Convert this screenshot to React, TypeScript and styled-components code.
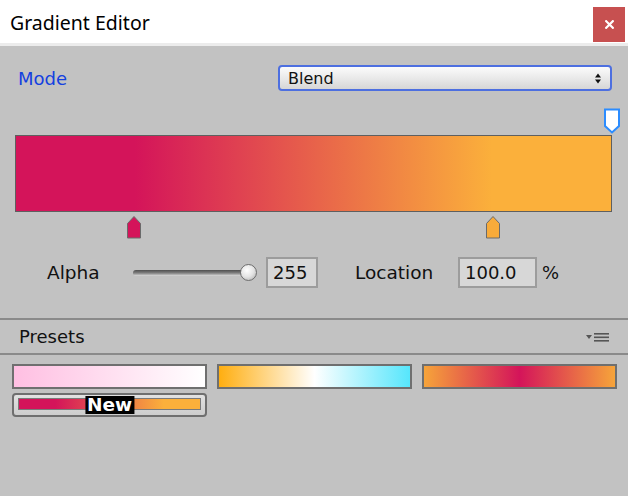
import React from 'react';
import styled, { createGlobalStyle } from 'styled-components';

const GlobalStyle = createGlobalStyle`
  html, body {
    margin: 0;
    padding: 0;
    background: #c2c2c2;
  }
  * {
    box-sizing: border-box;
  }
`;

const CRIMSON = '#d4145a';
const ORANGE = '#fbb03b';

const Window = styled.div`
  width: 628px;
  height: 496px;
  background: #c2c2c2;
  display: flex;
  flex-direction: column;
  font-family: 'DejaVu Sans', Verdana, sans-serif;
  color: #111;
  overflow: hidden;
`;

const TitleBar = styled.div`
  height: 46px;
  background: #fff;
  border-bottom: 3px solid #ececec;
  display: flex;
  align-items: flex-start;
  justify-content: space-between;
  padding: 0 3px 0 10px;
`;

const Title = styled.div`
  font-family: 'Noto Sans', 'Open Sans', sans-serif;
  font-size: 19.5px;
  line-height: 45px;
  color: #000;
`;

const CloseButton = styled.button`
  margin-top: 7px;
  width: 32px;
  height: 35px;
  border: none;
  padding: 0;
  background: #c75050;
  display: flex;
  align-items: center;
  justify-content: center;
  cursor: pointer;
`;

const Editor = styled.div`
  padding: 19px 16px 0 15px;
`;

const ModeRow = styled.div`
  display: flex;
  align-items: center;
  justify-content: space-between;
  height: 26px;
`;

const ModeLabel = styled.span`
  font-size: 18px;
  color: #1440e0;
  margin-left: 3px;
`;

const Select = styled.div`
  width: 334px;
  height: 26px;
  border: 2px solid #4d6fe0;
  border-radius: 4px;
  background: linear-gradient(#fbfbfb, #e6e6e6 60%, #d6d6d6);
  display: flex;
  align-items: center;
  justify-content: space-between;
  padding: 0 9px 0 8px;
  font-size: 16px;
  color: #111;
`;

const StopTrack = styled.div<{ $height: number }>`
  position: relative;
  height: ${({ $height }) => $height}px;
`;

const Stop = styled.svg<{ $top: number }>`
  position: absolute;
  top: ${({ $top }) => $top}px;
  transform: translateX(-50%);
`;

const GradientBar = styled.div`
  height: 77px;
  border: 1px solid #5f5f5f;
  background: linear-gradient(to right, ${CRIMSON} 20%, ${ORANGE} 80%);
`;

const AlphaRow = styled.div`
  margin-top: 17px;
  height: 31px;
  display: flex;
  align-items: center;
  padding-left: 32px;
  font-size: 18px;
`;

const FieldLabel = styled.span<{ $width: number }>`
  width: ${({ $width }) => $width}px;
  font-size: 18.5px;
`;

const Slider = styled.div`
  position: relative;
  width: 124px;
  height: 20px;
  margin-right: 9px;
`;

const SliderTrack = styled.div`
  position: absolute;
  left: 0;
  top: 7px;
  width: 118px;
  height: 6px;
  border-radius: 3px;
  background: linear-gradient(#4e4e4e, #808080 50%, #dcdcdc);
`;

const SliderThumb = styled.div`
  position: absolute;
  left: 107px;
  top: 1px;
  width: 17px;
  height: 17px;
  border-radius: 50%;
  border: 1px solid #6e6e6e;
  background: radial-gradient(circle at 40% 35%, #ffffff, #e4e4e4 50%, #a9a9a9);
`;

const NumberBox = styled.div<{ $width: number }>`
  width: ${({ $width }) => $width}px;
  height: 31px;
  border: 2px solid #9c9c9c;
  background: #d7d7d7;
  padding-left: 5px;
  display: flex;
  align-items: center;
  font-size: 18px;
`;

const Gap = styled.span<{ $width: number }>`
  display: inline-block;
  width: ${({ $width }) => $width}px;
`;

const PresetsHeader = styled.div`
  margin-top: 30px;
  height: 37px;
  border-top: 2px solid #8a8a8a;
  border-bottom: 2px solid #8a8a8a;
  display: flex;
  align-items: center;
  justify-content: space-between;
  padding: 0 18px 0 19px;
  font-size: 18px;
`;

const PresetGrid = styled.div`
  display: flex;
  flex-wrap: wrap;
  gap: 4px 10px;
  padding: 9px 0 0 12px;
  width: 628px;
`;

const Swatch = styled.div<{ $bg: string }>`
  width: 195px;
  height: 25px;
  border: 2px solid #6f6f6f;
  background: ${({ $bg }) => $bg};
`;

const NewButton = styled.button`
  position: relative;
  width: 195px;
  height: 24px;
  border: 2px solid #6f6f6f;
  border-radius: 4px;
  background: linear-gradient(#e2e2e2, #cdcdcd);
  padding: 3px 4px 5px 4px;
  cursor: pointer;
`;

const NewGradient = styled.div`
  height: 100%;
  border: 1px solid #7a7a7a;
  background: linear-gradient(to right, ${CRIMSON} 20%, ${ORANGE} 80%);
`;

const NewLabel = styled.span`
  position: absolute;
  left: 50%;
  top: 50%;
  transform: translate(-50%, -50%);
  background: #000;
  color: #fff;
  font-family: 'DejaVu Sans', Verdana, sans-serif;
  font-weight: bold;
  font-size: 18.5px;
  line-height: 18px;
  padding: 0 2px;
`;

const presets = [
  'linear-gradient(to right, #ffbfe2, #ffffff)',
  'linear-gradient(to right, #ffae10, #ffffff 50%, #56e6fc)',
  `linear-gradient(to right, #f6a43a, ${CRIMSON} 50%, #f6a43a)`,
];

const ColorStop = ({ color, at }: { color: string; at: number }) => (
  <Stop $top={3} width="16" height="24" viewBox="0 0 16 24" style={{ left: `${at}%` }}>
    <path d="M1.5 23 V8.5 L8 1.5 L14.5 8.5 V23 Z" fill={color} stroke="#6a6a6a" strokeWidth="1" />
  </Stop>
);

const AlphaStop = ({ at }: { at: number }) => (
  <Stop $top={0} width="17" height="26" viewBox="0 0 17 26" style={{ left: `${at}%` }}>
    <path d="M1.5 1.5 H15.5 V18 L8.5 24.5 L1.5 18 Z" fill="#fff" stroke="#2b8cff" strokeWidth="2" />
  </Stop>
);

const UpDownArrows = () => (
  <svg width="6" height="11" viewBox="0 0 6 11">
    <path d="M0 4.5 L3 0.5 L6 4.5 Z M0 6.5 L3 10.5 L6 6.5 Z" fill="#111" />
  </svg>
);

const MenuIcon = () => (
  <svg width="25" height="10" viewBox="0 0 25 10">
    <path d="M1 3 H7 L4 7 Z" fill="#555" />
    <rect x="9" y="1" width="15" height="1.6" fill="#555" />
    <rect x="9" y="4.5" width="15" height="1.6" fill="#555" />
    <rect x="9" y="8" width="15" height="1.6" fill="#555" />
  </svg>
);

export default function App() {
  return (
    <Window>
      <GlobalStyle />
      <TitleBar>
        <Title>Gradient Editor</Title>
        <CloseButton aria-label="Close">
          <svg width="9" height="9" viewBox="0 0 9 9">
            <path d="M1.2 1.2 L7.8 7.8 M7.8 1.2 L1.2 7.8" stroke="#fff" strokeWidth="2.2" strokeLinecap="square" />
          </svg>
        </CloseButton>
      </TitleBar>

      <Editor>
        <ModeRow>
          <ModeLabel>Mode</ModeLabel>
          <Select>
            <span>Blend</span>
            <UpDownArrows />
          </Select>
        </ModeRow>

        <StopTrack $height={27} style={{ marginTop: 17 }}>
          <AlphaStop at={100} />
        </StopTrack>
        <GradientBar />
        <StopTrack $height={28}>
          <ColorStop color={CRIMSON} at={20} />
          <ColorStop color="#f8ab3a" at={80} />
        </StopTrack>

        <AlphaRow>
          <FieldLabel $width={86}>Alpha</FieldLabel>
          <Slider>
            <SliderTrack />
            <SliderThumb />
          </Slider>
          <NumberBox $width={52}>255</NumberBox>
          <Gap $width={37} />
          <FieldLabel $width={103}>Location</FieldLabel>
          <NumberBox $width={79}>100.0</NumberBox>
          <Gap $width={5} />
          <span>%</span>
        </AlphaRow>
      </Editor>

      <PresetsHeader>
        <span>Presets</span>
        <MenuIcon />
      </PresetsHeader>

      <PresetGrid>
        {presets.map((bg) => (
          <Swatch key={bg} $bg={bg} />
        ))}
        <NewButton>
          <NewGradient />
          <NewLabel>New</NewLabel>
        </NewButton>
      </PresetGrid>
    </Window>
  );
}
